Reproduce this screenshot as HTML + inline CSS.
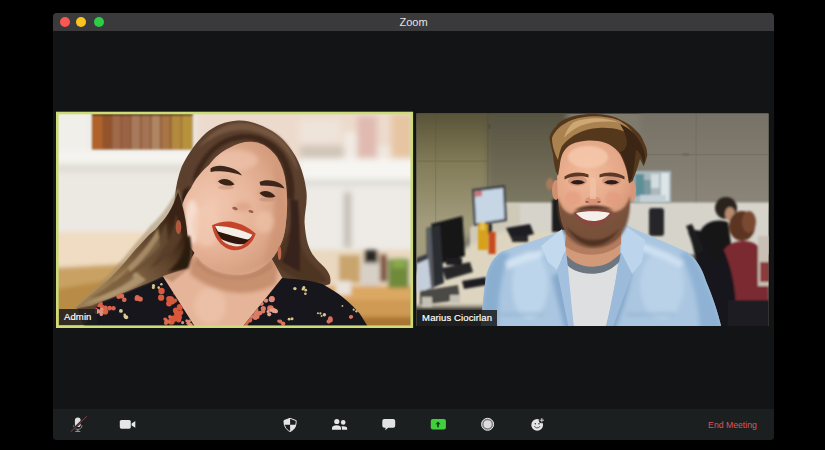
<!DOCTYPE html>
<html lang="en">
<head>
<meta charset="utf-8">
<title>Zoom</title>
<style>
html,body{margin:0;padding:0;background:#000;}
body{width:825px;height:450px;position:relative;overflow:hidden;font-family:"Liberation Sans",sans-serif;}
#win{position:absolute;left:53px;top:13px;width:721px;height:427px;background:#131416;border-radius:4px 4px 4px 4px;overflow:hidden;}
#titlebar{position:absolute;left:0;top:0;width:100%;height:17.5px;background:#3a3a3c;}
#title{position:absolute;left:0;width:100%;top:2.5px;text-align:center;font-size:11px;line-height:13px;color:#e4e4e6;}
.tl{position:absolute;top:3.8px;width:10px;height:10px;border-radius:50%;}
#toolbar{position:absolute;left:0;top:395.8px;width:100%;height:31.2px;background:#1c1f20;}
#end{position:absolute;left:655.1px;top:407.1px;font-size:8.7px;line-height:10px;color:#d8585d;white-space:nowrap;}
#art{position:absolute;left:0;top:0;width:825px;height:450px;}
.lbl{position:absolute;height:16px;background:rgba(28,28,30,.86);color:#fff;font-size:9.5px;line-height:16px;letter-spacing:.12px;-webkit-text-stroke:.18px #fff;white-space:nowrap;}
</style>
</head>
<body>
<div id="win">
  <div id="titlebar">
    <div class="tl" style="left:7.1px;background:#fc5753;"></div>
    <div class="tl" style="left:23.4px;background:#fcc41e;"></div>
    <div class="tl" style="left:40.5px;background:#2ccf44;"></div>
    <div id="title">Zoom</div>
  </div>
  <div id="toolbar"></div>
  <div id="end">End Meeting</div>
</div>
<svg id="art" viewBox="0 0 825 450" width="825" height="450">
<defs>
<clipPath id="clipL"><rect x="57" y="112.500" width="355.500" height="214.500"/></clipPath>
<clipPath id="clipR"><rect x="416.500" y="113.500" width="352" height="212.500"/></clipPath>
<filter id="b05" x="-10%" y="-10%" width="120%" height="120%"><feGaussianBlur stdDeviation="0.6"/></filter>
<filter id="b1" x="-10%" y="-10%" width="120%" height="120%"><feGaussianBlur stdDeviation="1.1"/></filter>
<filter id="b2" x="-10%" y="-10%" width="120%" height="120%"><feGaussianBlur stdDeviation="2"/></filter>
<filter id="b3" x="-10%" y="-10%" width="120%" height="120%"><feGaussianBlur stdDeviation="3"/></filter>
<radialGradient id="gFaceR" gradientUnits="userSpaceOnUse" cx="588" cy="175" r="62"><stop offset="0" stop-color="#f0bb9c"/><stop offset=".55" stop-color="#e5a888"/><stop offset="1" stop-color="#c98a6c"/></radialGradient>
<radialGradient id="gFaceL" gradientUnits="userSpaceOnUse" cx="212" cy="205" r="80"><stop offset="0" stop-color="#f1c8b0"/><stop offset=".5" stop-color="#e8b69b"/><stop offset="1" stop-color="#d39a7c"/></radialGradient>
<clipPath id="clipFaceL"><path d="M180.500,214 C181.500,204 185,196 191,188 C195,179 202,171 209,165 C214,158 222,151 230,147.500 C238,143 246,141 254,142 C264,143 271,149 277,157 C282,165 285,174 286,184 C287.500,196 287.500,210 286,222 C285,236 281,248 271,260 C263,268 254,273.500 244,274.500 C236,275.500 227,274 219,271 C211,268 205,264 200,259 C193,252 187,243 184,234 C181.500,227 180,220 180.500,214Z"/></clipPath>
<clipPath id="clipNeck"><path d="M196,250 L185,270 L160,276 L194,330 L241,330 L283,279 L270,256 Z"/></clipPath>
<linearGradient id="gHairL" gradientUnits="userSpaceOnUse" x1="185" y1="240" x2="110" y2="290"><stop offset="0" stop-color="#3a2416"/><stop offset=".3" stop-color="#5e432c"/><stop offset=".65" stop-color="#7d5f40"/><stop offset="1" stop-color="#987b52"/></linearGradient>
<clipPath id="clipShirt"><path d="M562,230 C540,240 515,246 501,252 C492,258 488,268 486,277 C483,295 482,312 481,330 L722,330 C718,312 712,295 706,281 C702,268 696,258 687,252 C670,244 645,234 624,224 Z"/></clipPath>
<linearGradient id="gWallL" gradientUnits="userSpaceOnUse" x1="0" y1="113" x2="0" y2="225"><stop offset="0" stop-color="#595338"/><stop offset=".45" stop-color="#827c59"/><stop offset="1" stop-color="#a39d7e"/></linearGradient>
<linearGradient id="gWallB" gradientUnits="userSpaceOnUse" x1="0" y1="113" x2="0" y2="205"><stop offset="0" stop-color="#565240"/><stop offset="1" stop-color="#7d7963"/></linearGradient>
<linearGradient id="gWallR" gradientUnits="userSpaceOnUse" x1="0" y1="113" x2="0" y2="205"><stop offset="0" stop-color="#777166"/><stop offset="1" stop-color="#8b8679"/></linearGradient>
<clipPath id="clipDress"><path d="M162,275 C150,280 128,289 99,303 L82,330 L197,330 Z M282,278 C295,279 310,280 322,284 C338,292 352,304 360,314 L370,330 L240,330Z"/></clipPath>

</defs>
<g clip-path="url(#clipL)">
  <!-- wall -->
  <rect x="56" y="111" width="358" height="218" fill="#ece9e3"/>
  <g filter="url(#b3)">
    <!-- top right pinkish blur -->
    <rect x="196" y="108" width="225" height="52" fill="#ecdbcd"/>
    <rect x="300" y="146" width="45" height="12" fill="#cfc5b8"/>
    <rect x="300" y="120" width="40" height="22" fill="#efe4da"/>
    <rect x="344" y="132" width="14" height="28" fill="#f1ebe4"/>
    <rect x="357" y="116" width="20" height="42" fill="#e0bab0"/>
    <rect x="377" y="146" width="14" height="14" fill="#f0e8e0"/>
    <rect x="391" y="114" width="22" height="44" fill="#e6c5a2"/>
    <!-- shelf right -->
    <rect x="300" y="159" width="120" height="22" fill="#f7f5f2"/>
    <rect x="300" y="180" width="120" height="5" fill="#d9d5cf"/>
    <rect x="300" y="186" width="120" height="60" fill="#eeebe6"/>
    <!-- left mantel -->
    <rect x="56" y="150" width="150" height="14" fill="#f6f4f0"/>
    <rect x="56" y="164" width="150" height="8" fill="#dfdbd4"/>
    <rect x="56" y="111" width="34" height="40" fill="#f1efea"/>
    <!-- faucet etc -->
    <rect x="344" y="192" width="7" height="56" fill="#bdb7ad"/>
  </g>
  <!-- books -->
  <g filter="url(#b1)">
    <rect x="92" y="112" width="100.500" height="37.500" fill="#8a5434"/>
    <rect x="92.500" y="113" width="10" height="36" fill="#b0622a"/>
    <rect x="104" y="113" width="7" height="36" fill="#94522a"/>
    <rect x="112.500" y="113" width="8" height="36" fill="#a06a48"/>
    <rect x="122" y="113" width="8" height="36" fill="#9a6444"/>
    <rect x="131.500" y="113" width="8.500" height="36" fill="#a87a5c"/>
    <rect x="141.500" y="113" width="8.500" height="36" fill="#a37352"/>
    <rect x="151.500" y="113" width="8.500" height="36" fill="#b08562"/>
    <rect x="161.500" y="113" width="8.500" height="36" fill="#a87444"/>
    <rect x="171.500" y="113" width="9.500" height="36" fill="#b38a3c"/>
    <rect x="182" y="113" width="10" height="36" fill="#b8923a"/>
    <rect x="92" y="112" width="100.500" height="4" fill="#5a3620" opacity=".7"/>
  </g>
  <!-- table left -->
  <g filter="url(#b2)">
    <rect x="50" y="232" width="140" height="36" fill="#f0dcc2"/>
    <polygon points="50,268 160,262 170,330 50,330" fill="#c9a264"/>
    <polygon points="50,290 110,280 80,330 50,330" fill="#b98c45"/>
    <!-- table right -->
    <rect x="318" y="285" width="100" height="46" fill="#dba862"/>
    <rect x="318" y="300" width="100" height="20" fill="#cf9a52"/>
    <rect x="318" y="317" width="100" height="14" fill="#a87632"/>
    <rect x="300" y="250" width="115" height="36" fill="#ead8c0"/>
    <!-- items on right -->
    <rect x="339" y="255" width="21" height="28" fill="#c9a46c"/>
    <rect x="364" y="250" width="14" height="14" fill="#2a2624"/>
    <rect x="361" y="263" width="18" height="23" fill="#d6d0c6"/>
    <rect x="388" y="259" width="21" height="29" fill="#6f8a3a"/>
    <rect x="392" y="258" width="14" height="10" fill="#8aa84e"/>
    <rect x="380" y="254" width="7" height="28" fill="#7a4a34"/>
    <rect x="336" y="281" width="15" height="14" fill="#e9e4dc"/>
  </g>
  <!-- hair back -->
  <g filter="url(#b05)">
    <path d="M238,120.500 C226,121 214,126 206,133 C196,142 188,154 182,166 C178,176 176,186 175,196 C174,206 172,214 165,230 C156,246 138,264 123,276 C108,288 92,299 77,308 L84,327 L200,327 L330,284 C332,276 328,270 319,262 C309,252 306,243 304.500,222 C304.500,212 307.500,204 306.500,192 C305,180 302,168 296,157 C290,147 282,137 272,131 C262,125 250,120 238,120.500Z" fill="#5c402e"/>
  </g>
  <g filter="url(#b1)">
    <!-- lighter top strands -->
    <path d="M236,123 C222,125 208,134 198,148 C206,142 218,134 232,131 C246,128 262,132 274,140 C284,147 292,158 298,172 C296,156 288,142 276,134 C264,126 250,122 236,123Z" fill="#7a5a42" opacity=".85"/>
    <!-- dark inner near hairline -->
    <path d="M199,175 C204,163 212,153 222,146 C232,140 246,138 256,141 C266,144 276,152 282,164 C286,174 287,186 287,198 L294,200 C296,184 292,166 284,154 C276,142 262,134 246,134 C230,134 214,142 204,156 C198,164 194,172 192,182Z" fill="#3a2517" opacity=".9"/>
    <path d="M300,215 C298,235 300,250 310,262 C318,270 326,276 327,282 L310,283 C295,280 280,270 272,260 L290,230Z" fill="#4e3424"/>
    <path d="M184,190 C178,205 176,222 178,240 C180,255 186,266 196,272 L200,258 C190,246 184,232 183,216 C183,206 186,196 190,186Z" fill="#2f1d12"/>
    <path d="M290,200 C292,225 290,245 282,262 L300,272 C300,250 300,225 298,200Z" fill="#38231a"/>
  </g>
  <!-- neck and chest -->
  <g filter="url(#b05)">
    <path d="M196,250 L185,270 L160,276 L194,330 L241,330 L283,279 L270,256 Z" fill="#e6b599"/>
  </g>
  <g filter="url(#b2)" clip-path="url(#clipNeck)">
    <path d="M190,250 C208,284 252,290 280,252 L276,284 C252,298 216,296 190,274Z" fill="#c58d6d" opacity=".95"/>
    <ellipse cx="210" cy="306" rx="16" ry="18" fill="#efc9b1" opacity=".55"/>
  </g>
  <g filter="url(#b1)" clip-path="url(#clipNeck)">
    <path d="M196,256 C212,278 250,282 274,256 L272,268 C250,286 214,284 196,264Z" fill="#b88062" opacity=".75"/>
  </g>
  <g filter="url(#b1)">
    <path d="M183,232 L181,252 L172,270 L161,276 L172,282 L190,268 L192,250Z" fill="#b98a6c" opacity=".8"/>
  </g>
  <!-- face -->
  <g filter="url(#b05)">
    <path id="faceL" d="M180.500,214 C181.500,204 185,196 191,188 C195,179 202,171 209,165 C214,158 222,151 230,147.500 C238,143 246,141 254,142 C264,143 271,149 277,157 C282,165 285,174 286,184 C287.500,196 287.500,210 286,222 C285,236 281,248 271,260 C263,268 254,273.500 244,274.500 C236,275.500 227,274 219,271 C211,268 205,264 200,259 C193,252 187,243 184,234 C181.500,227 180,220 180.500,214Z" fill="url(#gFaceL)"/>
  </g>
  <g clip-path="url(#clipFaceL)">
    <g filter="url(#b2)">
      <ellipse cx="192" cy="222" rx="7" ry="22" fill="#f9e6db" opacity=".8"/>
      <ellipse cx="206" cy="226" rx="14" ry="20" fill="#f2cbb4" opacity=".7"/>
      <ellipse cx="236" cy="160" rx="22" ry="10" fill="#eec5ad" opacity=".7"/>
      <path d="M274,160 C284,180 290,210 286,240 C280,256 270,266 260,270 C272,245 278,205 274,160Z" fill="#cf9677" opacity=".9"/>
      <ellipse cx="264" cy="222" rx="10" ry="11" fill="#ecbfa4" opacity=".8"/>
      <path d="M205,262 C220,274 250,276 270,260 L262,280 L215,280Z" fill="#d9a688" opacity=".8"/>
      <ellipse cx="243" cy="207" rx="9" ry="5" fill="#dda487" opacity=".8"/>
      <ellipse cx="226" cy="181" rx="10" ry="5" fill="#d9a88e" opacity=".6"/>
      <ellipse cx="268" cy="193" rx="10" ry="5" fill="#cf9a80" opacity=".6"/>
    </g>
    <g filter="url(#b05)">
      <!-- brows -->
      <path d="M210.500,168.500 C216,164 226,165.500 234,169 C238,171 240.500,173 242,175.500 C236,173.500 230,172 224,171.500 C218,171 214,171 210.500,172Z" fill="#3e281a"/>
      <path d="M259.500,182 C266,179 274,180.500 280,183.500 C282,184.500 283.500,186.500 284.500,188.500 C278,186.500 270,185.500 260.500,185.500Z" fill="#3e281a"/>
      <!-- eyes -->
      <path d="M218,181.500 C221,177.500 230,178 234.500,184.500 C229,187 222,185.500 218,181.500Z" fill="#3a2218"/><ellipse cx="226" cy="187.500" rx="8" ry="2" fill="#d29c82" opacity=".7"/>
      <path d="M259.500,193 C263,189.500 271,190.500 275.500,196.500 C270,199 263,197.500 259.500,193Z" fill="#3a2218"/><ellipse cx="267" cy="199.500" rx="8" ry="2" fill="#c9917a" opacity=".7"/>
      <!-- nostrils -->
      <ellipse cx="235" cy="208.500" rx="2.800" ry="1.500" fill="#9c5f4c" transform="rotate(15 235 208.500)"/>
      <ellipse cx="251" cy="211.500" rx="2.600" ry="1.400" fill="#9c5f4c" transform="rotate(15 251 211.500)"/>
      <!-- mouth -->
      <path d="M212,225.300 C218,222.500 226,220.500 233,222 C241,223.500 250,228 255.700,233.800 C253,243 245,250.500 234,250.300 C223,249.500 214,239 212,225.300Z" fill="#c4452c"/>
      <path d="M215,226.500 C224,225.500 240,229.500 252.500,235 C249,242 242,246.300 234.500,246 C226,245.500 218,237 215,226.500Z" fill="#2e1410"/>
      <path d="M215,226.300 C224,225.200 240,229.200 252.500,234.800 C251,237.500 249.500,239 247.500,239.500 C238,237.500 226,234 218,231.500Z" fill="#f5eee6"/>
      <path d="M221,239 C227,242 236,244.500 244,244.300 C241,246.500 237,247 233,246 C228,245 223.500,242.500 221,239Z" fill="#ece0d4"/>
    </g>
  </g>
  <!-- dress -->
  <g filter="url(#b05)">
    <path d="M162,275 C150,280 128,289 99,303 L82,330 L197,330 Z" fill="#17151a"/>
    <path d="M282,278 C295,279 310,280 322,284 C338,292 352,304 360,314 L370,330 L240,330Z" fill="#17151a"/>
  </g>
  <!-- hair front over shoulder -->
  <g filter="url(#b1)">
    <path d="M178,188 C168,208 158,219 150,226 C146,232 140,238 135,244 C130,250 124,258 118,264 C112,271 105,278 99,284 C93,290 87,295 82,299 L73,309 L91.700,305.600 C100,302 108,299 116,295.800 C124,292.500 132,289.500 140.600,286 C148,283 156,279.500 162.600,276.200 L186,268 C190,250 188,215 178,188Z" fill="#a38a68" opacity=".55"/>
  </g>
  <g filter="url(#b05)">
    <path d="M178,192 C172,210 165,219 160,224 C156,230 152,232 148,236 C144,240 140,245 135.700,249.300 C131,255 126,261 121,266.500 C115,273 110,278 104,283.600 C98,289 92,294 86.800,298.300 L74.600,308.500 L91.700,305.600 C100,302 108,299 116,295.800 C124,292.500 132,289.500 140.600,286 C148,283 156,279.500 162.600,276.200 L186,268 C190,250 188,218 178,192Z" fill="url(#gHairL)"/>
  </g>
  <g filter="url(#b1)">
    <path d="M158,228 C150,244 134,262 112,282 C126,276 146,262 160,246Z" fill="#b0946c" opacity=".85"/>
    <path d="M136,272 C124,284 106,296 84,304 C104,302 128,292 146,280Z" fill="#b49a74" opacity=".85"/>
    <path d="M176,214 C174,232 166,250 150,268 C164,262 176,250 182,236Z" fill="#5a3e2a" opacity=".9"/>
    <path d="M166,222 C160,240 146,258 126,276 C140,272 158,258 168,242Z" fill="#6a4e34" opacity=".7"/>
    <path d="M128,268 C118,280 104,290 90,298 C104,296 122,288 134,278Z" fill="#755838" opacity=".7"/>
    <path d="M186,236 C186,250 180,262 168,272 L188,268 C192,258 192,246 190,236Z" fill="#2c1b10"/>
  </g>
  <!-- earrings -->
  <ellipse cx="178.500" cy="227" rx="2.800" ry="7" fill="#b0583c"/>
  <ellipse cx="279.500" cy="253" rx="1.800" ry="7" fill="#c06a50"/>
  <!-- flowers -->
  <g filter="url(#b05)" clip-path="url(#clipDress)">
    <g fill="#d9624a"><circle cx="102.7" cy="308.0" r="2.7"/><circle cx="109.6" cy="308.2" r="2.3"/><circle cx="109.6" cy="307.7" r="1.9"/><circle cx="102.3" cy="306.6" r="1.9"/><circle cx="95.7" cy="309.4" r="2.0"/><circle cx="105.2" cy="311.5" r="3.1"/><circle cx="99.6" cy="304.1" r="3.2"/><circle cx="113.5" cy="308.3" r="2.2"/><circle cx="105.5" cy="307.6" r="2.2"/></g>
    <g fill="#e0907c"><circle cx="101.0" cy="312.2" r="2.1"/><circle cx="97.5" cy="311.6" r="2.1"/><circle cx="101.3" cy="314.4" r="1.7"/><circle cx="98.2" cy="310.9" r="1.8"/><circle cx="96.2" cy="312.2" r="1.8"/><circle cx="101.7" cy="309.2" r="1.8"/></g>
    <g fill="#d86a52"><circle cx="118.7" cy="296.7" r="2.4"/><circle cx="121.7" cy="296.0" r="2.5"/><circle cx="124.3" cy="299.7" r="2.3"/><circle cx="124.0" cy="300.3" r="1.5"/></g>
    <g fill="#dc6a50"><circle cx="137.3" cy="297.6" r="2.5"/><circle cx="140.2" cy="299.0" r="2.6"/><circle cx="136.8" cy="298.8" r="2.3"/></g>
    <g fill="#d85a3c"><circle cx="175.8" cy="292.7" r="2.7"/><circle cx="169.2" cy="298.9" r="3.0"/><circle cx="161.5" cy="290.9" r="3.2"/><circle cx="169.0" cy="303.5" r="2.9"/><circle cx="175.0" cy="300.6" r="2.2"/><circle cx="171.2" cy="300.8" r="3.1"/><circle cx="172.3" cy="302.0" r="2.5"/><circle cx="171.3" cy="298.9" r="2.6"/><circle cx="161.1" cy="297.7" r="3.1"/></g>
    <g fill="#d9583a"><circle cx="180.7" cy="312.6" r="2.6"/><circle cx="171.4" cy="321.4" r="3.3"/><circle cx="179.8" cy="317.0" r="2.3"/><circle cx="178.6" cy="319.6" r="2.8"/><circle cx="178.0" cy="315.4" r="2.6"/><circle cx="173.6" cy="318.8" r="3.3"/><circle cx="175.8" cy="310.5" r="2.9"/><circle cx="177.3" cy="313.8" r="3.3"/><circle cx="179.9" cy="307.0" r="3.1"/><circle cx="174.1" cy="317.5" r="2.1"/></g>
    <g fill="#dc6c50"><circle cx="165.0" cy="319.1" r="1.7"/><circle cx="166.6" cy="321.8" r="2.0"/><circle cx="166.1" cy="320.0" r="1.8"/><circle cx="169.1" cy="321.8" r="1.6"/><circle cx="169.9" cy="316.9" r="1.8"/><circle cx="165.9" cy="323.0" r="2.0"/></g>
    <g fill="#e08a70"><circle cx="190.2" cy="325.3" r="2.5"/><circle cx="182.6" cy="322.6" r="1.6"/><circle cx="188.2" cy="323.3" r="1.8"/><circle cx="186.8" cy="320.7" r="1.5"/><circle cx="189.5" cy="321.1" r="1.6"/></g>
    <g fill="#e08a74"><circle cx="260.9" cy="299.7" r="2.5"/><circle cx="271.9" cy="298.9" r="2.8"/><circle cx="261.7" cy="303.8" r="2.0"/><circle cx="262.8" cy="295.1" r="2.9"/><circle cx="260.3" cy="302.5" r="2.9"/><circle cx="271.7" cy="299.3" r="2.9"/><circle cx="265.4" cy="294.0" r="2.1"/><circle cx="257.3" cy="299.6" r="1.8"/><circle cx="266.0" cy="300.6" r="2.2"/><circle cx="257.6" cy="290.6" r="2.4"/></g>
    <g fill="#dd7a62"><circle cx="270.5" cy="308.5" r="3.3"/><circle cx="251.2" cy="316.5" r="2.2"/><circle cx="255.3" cy="317.1" r="2.8"/><circle cx="263.3" cy="308.6" r="2.6"/><circle cx="247.8" cy="306.9" r="1.9"/><circle cx="247.0" cy="305.1" r="3.1"/><circle cx="254.0" cy="308.5" r="2.1"/><circle cx="255.3" cy="309.8" r="3.1"/><circle cx="259.9" cy="313.1" r="2.4"/><circle cx="263.1" cy="311.5" r="2.1"/><circle cx="256.4" cy="316.0" r="3.2"/><circle cx="255.2" cy="311.5" r="3.1"/></g>
    <g fill="#e6a08e"><circle cx="275.8" cy="311.4" r="1.9"/><circle cx="268.0" cy="311.5" r="1.5"/><circle cx="275.7" cy="311.2" r="2.1"/><circle cx="273.9" cy="310.6" r="2.5"/><circle cx="271.3" cy="310.0" r="1.8"/><circle cx="269.2" cy="314.3" r="2.1"/></g>
    <g fill="#d96a50"><circle cx="245.8" cy="325.3" r="1.8"/><circle cx="249.2" cy="320.4" r="2.2"/><circle cx="238.5" cy="318.5" r="2.2"/><circle cx="250.1" cy="320.1" r="2.3"/><circle cx="245.2" cy="321.9" r="2.2"/><circle cx="246.1" cy="322.3" r="2.7"/></g>
    <g fill="#d9705c"><circle cx="283.1" cy="323.6" r="2.2"/><circle cx="280.3" cy="321.5" r="2.0"/><circle cx="278.7" cy="321.0" r="1.6"/></g>
    <g fill="#d9705c"><circle cx="328.6" cy="321.6" r="2.1"/><circle cx="330.3" cy="320.1" r="2.5"/><circle cx="330.3" cy="318.5" r="2.3"/></g>
    <g fill="#d9705c"><circle cx="350.6" cy="317.1" r="1.8"/><circle cx="351.4" cy="316.8" r="1.8"/></g>
    <g fill="#d8c58a"><circle cx="153.3" cy="287.5" r="1.5"/><circle cx="161.4" cy="284.3" r="1.2"/><circle cx="153.5" cy="285.6" r="1.6"/><circle cx="158.7" cy="287.6" r="1.3"/></g>
    <g fill="#dccb96"><circle cx="124.7" cy="314.7" r="1.3"/><circle cx="120.9" cy="310.9" r="1.9"/><circle cx="125.2" cy="316.6" r="1.7"/><circle cx="126.2" cy="317.2" r="2.0"/></g>
    <g fill="#d8c58a"><circle cx="305.4" cy="293.8" r="1.3"/><circle cx="294.9" cy="288.6" r="1.7"/><circle cx="305.7" cy="290.2" r="1.4"/><circle cx="302.9" cy="289.3" r="1.3"/><circle cx="303.9" cy="287.5" r="1.4"/><circle cx="303.5" cy="288.2" r="1.3"/></g>
    <g fill="#d8c58a"><circle cx="317.9" cy="313.3" r="1.0"/><circle cx="324.4" cy="314.7" r="1.7"/><circle cx="321.6" cy="316.0" r="1.0"/><circle cx="320.4" cy="313.4" r="1.1"/></g>
    <g fill="#d8c58a"><circle cx="289.1" cy="319.2" r="1.4"/><circle cx="292.0" cy="318.7" r="1.5"/></g>
    <g fill="#d8c58a"><circle cx="342.4" cy="305.9" r="0.9"/><circle cx="353.7" cy="309.7" r="1.1"/><circle cx="356.5" cy="311.3" r="1.2"/></g>
  </g>
</g>
<rect x="57.300" y="113" width="354.500" height="213.700" fill="none" stroke="#cbdc78" stroke-width="2.600"/>

<g clip-path="url(#clipR)">
  <rect x="416" y="113" width="353" height="214" fill="#7f7a6c"/>
  <g filter="url(#b3)">
    <!-- back wall gradient pieces -->
    <rect x="487" y="100" width="80" height="120" fill="url(#gWallB)"/>
    <rect x="640" y="100" width="140" height="110" fill="url(#gWallR)"/>
    <!-- left wall -->
    <polygon points="400,100 487,100 487,228 400,270" fill="url(#gWallL)"/>
  </g>
  <g filter="url(#b05)" opacity=".2">
    <rect x="640" y="154" width="130" height="1.200" fill="#4e4a40"/>
    <rect x="695.500" y="113" width="1.200" height="90" fill="#5a564c"/>
    <rect x="417" y="160.500" width="70" height="1.200" fill="#4a4630"/>
    <rect x="435" y="113" width="1.200" height="110" fill="#504c34"/>
    <rect x="487" y="113" width="1.500" height="100" fill="#45412f"/>
    <ellipse cx="686" cy="154.500" rx="4" ry="1.800" fill="#3e3a32"/>
    <rect x="487.500" y="124" width="3" height="5" fill="#2a2620"/>
  </g>
  <g filter="url(#b1)">
    <!-- white partition -->
    <rect x="498" y="202.500" width="277" height="52" fill="#d6d3cb"/>
    <polygon points="470,228 498,204 520,204 520,260 470,260" fill="#cfc9b8"/>
  </g>
  <g filter="url(#b2)">
    <!-- desk -->
    <polygon points="410,275 460,250 500,232 560,232 560,262 500,310 410,310" fill="#ddd5c0"/>
    <rect x="410" y="306" width="90" height="24" fill="#34322e"/>
  </g>
  <g filter="url(#b1)">
    <!-- poster -->
    <rect x="633" y="171" width="38" height="32" fill="#a9b9bd"/>
    <rect x="635" y="174" width="9" height="22" fill="#5d8f99"/>
    <rect x="644" y="180" width="7" height="18" fill="#7c9aa0"/>
    <rect x="651" y="174" width="8" height="14" fill="#d3dde0"/>
    <rect x="661" y="173" width="8" height="28" fill="#dde5e8"/>
    <rect x="640" y="195" width="26" height="7" fill="#c5d0d6"/>
    <!-- speaker -->
    <rect x="649" y="208" width="15" height="28" rx="3" fill="#26262a"/>
    <!-- person behind left -->
    <ellipse cx="550" cy="184" rx="4" ry="6" fill="#a87a5c"/>
    <path d="M552,200 L562,196 L566,232 L552,232Z" fill="#1d1f1e"/>
    <!-- monitor 1 -->
    <polygon points="472,189 505,185 507,221 474,226" fill="#3a4048"/>
    <polygon points="474.500,191.500 503,188 504.500,219 476,223.500" fill="#c6d6e4"/>
    <polygon points="474.500,191.500 482,190.500 482,196 474.800,197" fill="#c9777a"/>
    <rect x="484" y="224" width="8" height="10" fill="#2c2c2e"/>
    <!-- monitor 2 dark -->
    <polygon points="431,224 462.500,216 465,256 440,264" fill="#141416"/>
    <rect x="446" y="258" width="16" height="7" fill="#1e1e20"/>
    <!-- front monitor side -->
    <polygon points="426.500,228 440,224.500 444,283 427,290" fill="#2c2e33"/>
    <polygon points="426.500,228 431,227 434,288 427,290" fill="#5a5d63"/>
    <!-- device left -->
    <polygon points="416.500,262 428,257 431,288 416.500,292" fill="#c5cfdc"/>
    <polygon points="416.500,258 427,254 428,259 416.500,264" fill="#3a3c42"/>
    <!-- toys -->
    <rect x="478" y="224" width="10" height="26" fill="#d6a21e"/>
    <rect x="488.500" y="232" width="7" height="22" fill="#c8481e"/>
    <rect x="480" y="222" width="5" height="8" fill="#e6c04a"/>
    <!-- stand -->
    <polygon points="506,228 530,224 534,234 512,240" fill="#1e1e20"/>
    <rect x="512" y="236" width="16" height="6" fill="#262628"/>
    <!-- dark desk items -->
    <polygon points="442,268 470,262 473,272 446,280" fill="#262628"/>
    <polygon points="462,281 486,277 487,285 464,289" fill="#1e1e20"/>
    <polygon points="420,291 458,285 460,300 420,305" fill="#4b4944"/>
    <rect x="422" y="297" width="10" height="10" fill="#c4c0b5"/>
    <rect x="450" y="295" width="10" height="8" fill="#c4c0b5"/>
    <!-- right: people -->
    <path d="M688,232 C700,226 720,236 730,260 C738,285 738,310 730,330 L690,330 C700,300 700,260 688,232Z" fill="#17181a"/>
    <polygon points="686,226 692,224 704,250 698,254" fill="#1c1c1e"/>
    <path d="M700,232 C704,222 716,218 728,222 L732,250 L712,262 C708,250 704,240 700,232Z" fill="#141416"/>
    <ellipse cx="726" cy="208" rx="11" ry="11" fill="#2a221c"/>
    <ellipse cx="730" cy="214" rx="5" ry="7" fill="#b58a6e"/>
    <ellipse cx="742" cy="226" rx="13" ry="15" fill="#5c3524"/>
    <ellipse cx="749" cy="222" rx="7" ry="11" fill="#7a4a32"/>
    <path d="M724,250 C730,240 750,238 758,246 C766,262 770,290 768,306 L736,310 C736,290 732,268 724,250Z" fill="#7c2a32"/>
    <rect x="728" y="300" width="45" height="30" fill="#1b1c20"/>
    <rect x="758" y="236" width="14" height="50" fill="#c9bfb4"/>
    <rect x="760" y="262" width="12" height="20" fill="#8a3a3a"/>
  </g>
  <!-- man: shirt -->
  <g filter="url(#b05)">
    <path d="M562,230 C540,240 515,246 501,252 C492,258 488,268 486,277 C483,295 482,312 481,330 L722,330 C718,312 712,295 706,281 C702,268 696,258 687,252 C670,244 645,234 624,224 Z" fill="#aac6e0"/>
  </g>
  <g clip-path="url(#clipShirt)">
    <g filter="url(#b2)">
      <path d="M501,252 C492,258 488,268 486,277 C483,295 482,312 478,330 L498,330 C498,300 500,275 510,254Z" fill="#8aaed0"/>
      <path d="M687,252 C696,258 702,268 706,281 C712,295 718,312 724,330 L700,330 C698,300 692,275 680,254Z" fill="#8fb2d4"/>
      <ellipse cx="530" cy="285" rx="18" ry="34" fill="#bdd5ea"/>
      <ellipse cx="662" cy="285" rx="22" ry="34" fill="#b9d2e8"/>
      <path d="M505,262 C515,256 530,252 545,250 L540,258 C528,260 516,264 508,270Z" fill="#d3e4f3"/>
      <path d="M640,242 C655,248 672,254 684,262 L680,268 C668,260 652,254 638,250Z" fill="#cfe1f2"/>
      <path d="M552,276 C556,295 560,312 566,332 L576,332 C572,312 568,292 566,270Z" fill="#86a9cc"/>
      <path d="M632,272 C628,295 622,312 614,332 L604,332 C610,312 616,292 618,266Z" fill="#83a6ca"/>
      <rect x="500" y="313" width="44" height="2.500" fill="#94b4d3"/>
      <rect x="626" y="313" width="48" height="2.500" fill="#94b4d3"/>
    </g>
  </g>
  <g filter="url(#b05)">
    <!-- neck -->
    <path d="M566,230 L564,256 C580,272 606,272 620,254 L621,224 Z" fill="#d39a7a"/>
    <path d="M566,236 C580,250 606,250 621,232 L621,244 C606,258 580,258 565,246Z" fill="#b47c5e"/>
    <!-- tshirt -->
    <path d="M566,264 C580,276 606,276 618,262 C616,285 610,310 605,330 L574,330 C572,310 568,285 566,264Z" fill="#dedfe0"/>
    <path d="M561,250 C566,254 570,260 576,263 C586,268 600,268 610,262 C614,259 618,256 621,253 L621.500,259 C618,264 612,269 604,272 C594,275 582,274 574,270 C568,267 564,262 561,257Z" fill="#6c7680"/>
    <!-- collar flaps -->
    <path d="M562,229 L566,250 L557,270 L548,262 L541,246 Z" fill="#c3d9ee"/>
    <path d="M623,224 L621,252 L632,274 L642,262 L645,240 Z" fill="#bcd5ec"/>
    <path d="M557,270 L566,250 L568,268 L574,330 L569,330 Z" fill="#a3c1de"/>
    <path d="M632,274 L621,252 L618,268 L606,330 L612,330Z" fill="#9cbbda"/>
  </g>
  <!-- head -->
  <g filter="url(#b05)">
    <!-- ears -->
    <ellipse cx="556" cy="190" rx="4" ry="10" fill="#d39070"/>
    <ellipse cx="631.500" cy="191" rx="4.500" ry="11" fill="#d8977a"/>
    <!-- face -->
    <path d="M557,160 C556,150 560,142 570,138 C585,133 610,134 622,140 C630,146 632,160 631,175 C631,195 630,212 624,226 C616,240 604,247 593,247 C582,247 570,240 563,226 C558,212 557,190 557,160Z" fill="url(#gFaceR)"/>
  </g>
  <g filter="url(#b1)">
    <ellipse cx="588" cy="157" rx="20" ry="11" fill="#f6c8ac" opacity=".85"/>
    <ellipse cx="573" cy="198" rx="8" ry="7" fill="#e79d82" opacity=".7"/>
    <ellipse cx="613" cy="198" rx="8" ry="7" fill="#e49a80" opacity=".65"/>
    <!-- beard -->
    <path d="M558,198 C561,208 566,213 572,214 C580,206 606,206 614,212 C622,211 627,206 630,196 C631,212 628,226 622,234 C614,244 604,248 593,248 C582,248 570,242 564,232 C559,222 557,212 558,198Z" fill="#62402c" opacity=".78"/>
    <path d="M566,226 C574,240 584,246 593,246 C603,246 612,240 620,228 C612,236 604,240 593,240 C582,240 574,234 566,226Z" fill="#3e2618" opacity=".7"/>
    <path d="M574,211 C582,204 604,204 613,210 C606,208 582,208 574,211Z" fill="#4a2e20"/>
  </g>
  <g filter="url(#b05)">
    <path d="M574,213 C582,209 604,209 612,212 C608,222 600,226 593,226 C585,226 578,221 574,213Z" fill="#8a463c"/>
    <path d="M576,213 C584,210.500 602,210.500 610,213 C606,219 600,221 593,221 C586,221 580,218 576,213Z" fill="#f4efea"/>
    <!-- nose -->
    <ellipse cx="593" cy="200.500" rx="8" ry="4" fill="#d48c72" opacity=".75"/>
    <path d="M590.500,178 C590,188 589.500,194 590,199 L596,199 C596.500,194 596,188 595.500,178Z" fill="#f3c4a8" opacity=".7"/>
    <ellipse cx="587" cy="202" rx="1.800" ry="1.100" fill="#8a4c3c" opacity=".8"/>
    <ellipse cx="599" cy="202" rx="1.800" ry="1.100" fill="#8a4c3c" opacity=".8"/>
    <ellipse cx="577.500" cy="181" rx="9.500" ry="5" fill="#c4846a" opacity=".6"/>
    <ellipse cx="611.500" cy="181" rx="9.500" ry="5" fill="#c4846a" opacity=".6"/>
    <!-- eyes/brows -->
    <path d="M564.500,176.500 C571,171.500 582,171.500 588.500,174.500 L588.500,177.500 C582,175.500 572,175.500 564.500,179.500Z" fill="#5c3826"/>
    <path d="M599.500,174.500 C606,171.500 617,171.500 624.500,176.500 L624.500,179.500 C616,175.500 606,175.500 599.500,177.500Z" fill="#5c3826"/>
    <path d="M570.500,182.500 C574,179.200 581,179.200 585,182.500 C581,185 574,185 570.500,182.500Z" fill="#2e1f1a"/>
    <path d="M604,182.500 C608,179.200 615,179.200 619,182.500 C615,185 608,185 604,182.500Z" fill="#2e1f1a"/>
    <!-- hair -->
    <path d="M555.600,171 C554,164 553,158 553,154 C551,146 549.500,140 549.500,137 C551,132 553,129 555.600,127 C558,123 562,120 566.600,118.600 C572,116 578,115 583.700,114.400 C591,113.600 599,113.800 605.700,114.900 C611,115.500 616,117 620.400,119.800 C626,122 631,125.500 635,129.600 C639,133 642,137 643.600,141.800 C646,146 647.300,150 647.300,155.200 C646.500,159 645,163 643.600,166.200 C642.500,164 641,161 640,159 C639,163 637.500,167 636.300,171 L632.600,181 L629,183.400 C628,177 627,171 625.300,166.200 C623,160 621,155 618,151.600 C614,147 610,144.500 605.700,143 C600,141 594,140.400 588.600,140.600 C582,141 576,142 571.500,144.200 C568,146 565,149 563,152.800 C561,157 560,162 559.700,166.200 L558,176Z" fill="#54391f"/>
    <path d="M552,138 C555,130 562,124 572,120 C586,115 604,115 618,120 C626,124 632,130 636,138 C626,130 612,127 598,128 C584,129 572,134 562,146 C560,150 559,155 558,160 C555,154 552,146 552,138Z" fill="#a98250"/>
    <path d="M574,122 C588,117 606,117 620,123 C612,121 598,121 586,124 C578,126 570,131 564,138 C566,131 569,126 574,122Z" fill="#cda874"/>
    <path d="M620,124 C630,128 638,136 642,146 C645,152 646,158 644,164 C642,156 638,150 636,150 C635,158 634,168 632,178 L629,182 C628,170 625,160 620,152 C628,150 630,140 620,124Z" fill="#3a2616"/>
  </g>
</g>

<g id="icons">
  <!-- mic muted -->
  <rect x="74.900" y="417.500" width="5.800" height="9.600" rx="2.900" fill="#dedede"/>
  <path d="M73.600,425.300 C73.600,430.800 82,430.800 82,425.300" fill="none" stroke="#8c8c8c" stroke-width="1"/>
  <rect x="77.300" y="429.400" width="1" height="2" fill="#9a9a9a"/>
  <rect x="75.300" y="430.900" width="5" height="1" fill="#9a9a9a"/>
  <line x1="70.700" y1="431.800" x2="86.900" y2="416.200" stroke="#1c1f20" stroke-width="2.200"/>
  <line x1="70.700" y1="431.800" x2="86.900" y2="416.200" stroke="#8a4a52" stroke-width="0.900"/>
  <!-- camera -->
  <rect x="119.800" y="420" width="11" height="8.700" rx="1.600" fill="#e6e6e6"/>
  <path d="M131.600,423.400 L135.300,421.100 L135.300,427.800 L131.600,425.500Z" fill="#e6e6e6"/>
  <!-- shield -->
  <path d="M290.100,418.300 L296.200,420.600 C296.300,425.600 294.600,429.400 290.100,431.600 C285.600,429.400 283.900,425.600 284,420.600 Z" fill="#1c1f20" stroke="#e4e4e4" stroke-width="1"/>
  <path d="M290.100,418.300 L290.100,424.700 L284,424.700 L284,420.600Z" fill="#e4e4e4"/>
  <path d="M290.100,424.700 L296.100,424.700 C295.500,427.800 293.600,430 290.100,431.600Z" fill="#e4e4e4"/>
  <!-- participants -->
  <circle cx="336.800" cy="421.500" r="2.600" fill="#e6e6e6"/>
  <circle cx="343.200" cy="422.400" r="2.300" fill="#e6e6e6"/>
  <path d="M332,429.800 L332,428 C332,426.200 334,425.300 336.600,425.300 C339.200,425.300 341,426.200 341,428 L341,429.800Z" fill="#e6e6e6"/>
  <path d="M341.900,429.800 L341.900,428 C341.900,427.400 341.700,426.900 341.400,426.500 C342,426.300 342.700,426.200 343.400,426.200 C345.600,426.200 347.200,427 347.200,428.500 L347.200,429.800Z" fill="#e6e6e6"/>
  <!-- chat -->
  <path d="M384.300,419 L393.200,419 Q395.200,419 395.200,421 L395.200,425.700 Q395.200,427.700 393.200,427.700 L388.200,427.700 L385.200,430.300 L385.600,427.700 L384.300,427.700 Q382.300,427.700 382.300,425.700 L382.300,421 Q382.300,419 384.300,419Z" fill="#e2e2e2"/>
  <!-- share -->
  <rect x="430.800" y="419" width="15.100" height="10.600" rx="2" fill="#3fd03c"/>
  <path d="M438,421.400 L440.500,424.200 L438.800,424.200 L438.800,427.300 L437.200,427.300 L437.200,424.200 L435.500,424.200Z" fill="#0c3a10"/>
  <!-- record -->
  <circle cx="487.600" cy="424.300" r="6" fill="#7c7c7c" stroke="#ececec" stroke-width="1"/>
  <circle cx="487.600" cy="424.300" r="4" fill="#dcdcdc"/>
  <!-- reactions -->
  <circle cx="537.200" cy="424.900" r="5.900" fill="#e6e6e6"/>
  <circle cx="541.800" cy="420.200" r="3" fill="#1c1f20"/>
  <path d="M541.800,418 L541.800,422.400 M539.600,420.200 L544,420.200" stroke="#e0e0e0" stroke-width="0.900" fill="none"/>
  <circle cx="535.300" cy="423.800" r="0.800" fill="#3a3a3a"/>
  <circle cx="539" cy="423.800" r="0.800" fill="#3a3a3a"/>
  <path d="M534.400,426.200 C535.600,428.400 538.800,428.400 540,426.200" stroke="#3a3a3a" stroke-width="0.900" fill="none"/>
</g>

</svg>
<div class="lbl" style="left:58.6px;top:309.3px;width:38.5px;"><span style="position:absolute;left:5.4px;">Admin</span></div>
<div class="lbl" style="left:416.8px;top:309.7px;width:80.7px;"><span style="position:absolute;left:5.3px;">Marius Ciocirlan</span></div>
</body>
</html>
